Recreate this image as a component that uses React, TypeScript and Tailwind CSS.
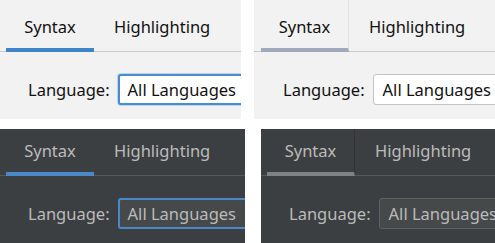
type Theme = "light" | "dark";

type PanelProps = {
  theme: Theme;
  focused: boolean;
  padTop: string;
  padLeft: string;
  className: string;
};

const Panel = ({ theme, focused, padTop, padLeft, className }: PanelProps) => {
  const dark = theme === "dark";

  const barColor = focused
    ? dark
      ? "border-[#4a88c7]"
      : "border-[#3f83c9]"
    : dark
    ? "border-[#7f8285]"
    : "border-[#a1aaba]";

  const boxClass = dark
    ? focused
      ? "border-[#4a88c7] bg-[#45494a] text-[#bbbbbb]"
      : "border-[#5f6264] bg-[#45494a] text-[#bbbbbb]"
    : focused
    ? "border-[#4b8bd0] bg-white text-[#111111] shadow-[0_0_0_1px_#b9d4ef]"
    : "border-[#c3c3c3] bg-white text-[#111111]";

  return (
    <div
      className={`overflow-hidden ${dark ? "bg-[#3c3f41] text-[#bbbbbb]" : "bg-[#f2f2f2] text-[#111111]"} ${className}`}
      style={{ fontFamily: '"Noto Sans", "Open Sans", sans-serif' }}
    >
      <div className={`flex items-end border-b ${dark ? "border-[#55595c]" : "border-[#cacaca]"} ${padLeft}`}>
        <div
          className={`-mb-px border-b-4 ${barColor} w-[88px] text-center text-[16.5px] leading-6 pb-[9px] ${padTop} ${
            focused ? "" : dark ? "border-r border-r-[#313335]" : "border-r border-r-[#e2e2e2]"
          }`}
        >
          Syntax
        </div>
        <div className={`-mb-px border-b-4 border-transparent pl-[20px] pr-[18px] text-[16.5px] leading-6 pb-[9px] ${padTop}`}>
          Highlighting
        </div>
      </div>

      <div className={`flex items-center gap-[8px] mt-[22px] ${padLeft === "pl-[7px]" ? "pl-[29px]" : "pl-[28px]"}`}>
        <span className="text-[16.5px] leading-6 whitespace-nowrap">Language:</span>
        <div
          className={`shrink-0 w-[220px] h-[31px] rounded-[3px] flex items-center whitespace-nowrap text-[16.5px] leading-6 ${
            focused ? "border-2 pl-[8px]" : "border pl-[9px]"
          } ${boxClass}`}
        >
          All Languages
        </div>
      </div>
    </div>
  );
};

const App = () => {
  return (
    <div className="w-[495px] h-[243px] bg-white overflow-hidden flex flex-col">
      <div className="flex h-[119px] gap-[13px]">
        <Panel theme="light" focused padTop="pt-[15px]" padLeft="pl-[6px]" className="w-[241px] shrink-0" />
        <Panel theme="light" focused={false} padTop="pt-[15px]" padLeft="pl-[7px]" className="flex-1" />
      </div>
      <div className="flex h-[114px] mt-[10px] gap-[16px]">
        <Panel theme="dark" focused padTop="pt-[10px]" padLeft="pl-[6px]" className="w-[245px] shrink-0" />
        <Panel theme="dark" focused={false} padTop="pt-[10px]" padLeft="pl-[6px]" className="flex-1" />
      </div>
    </div>
  );
};

export default App;
